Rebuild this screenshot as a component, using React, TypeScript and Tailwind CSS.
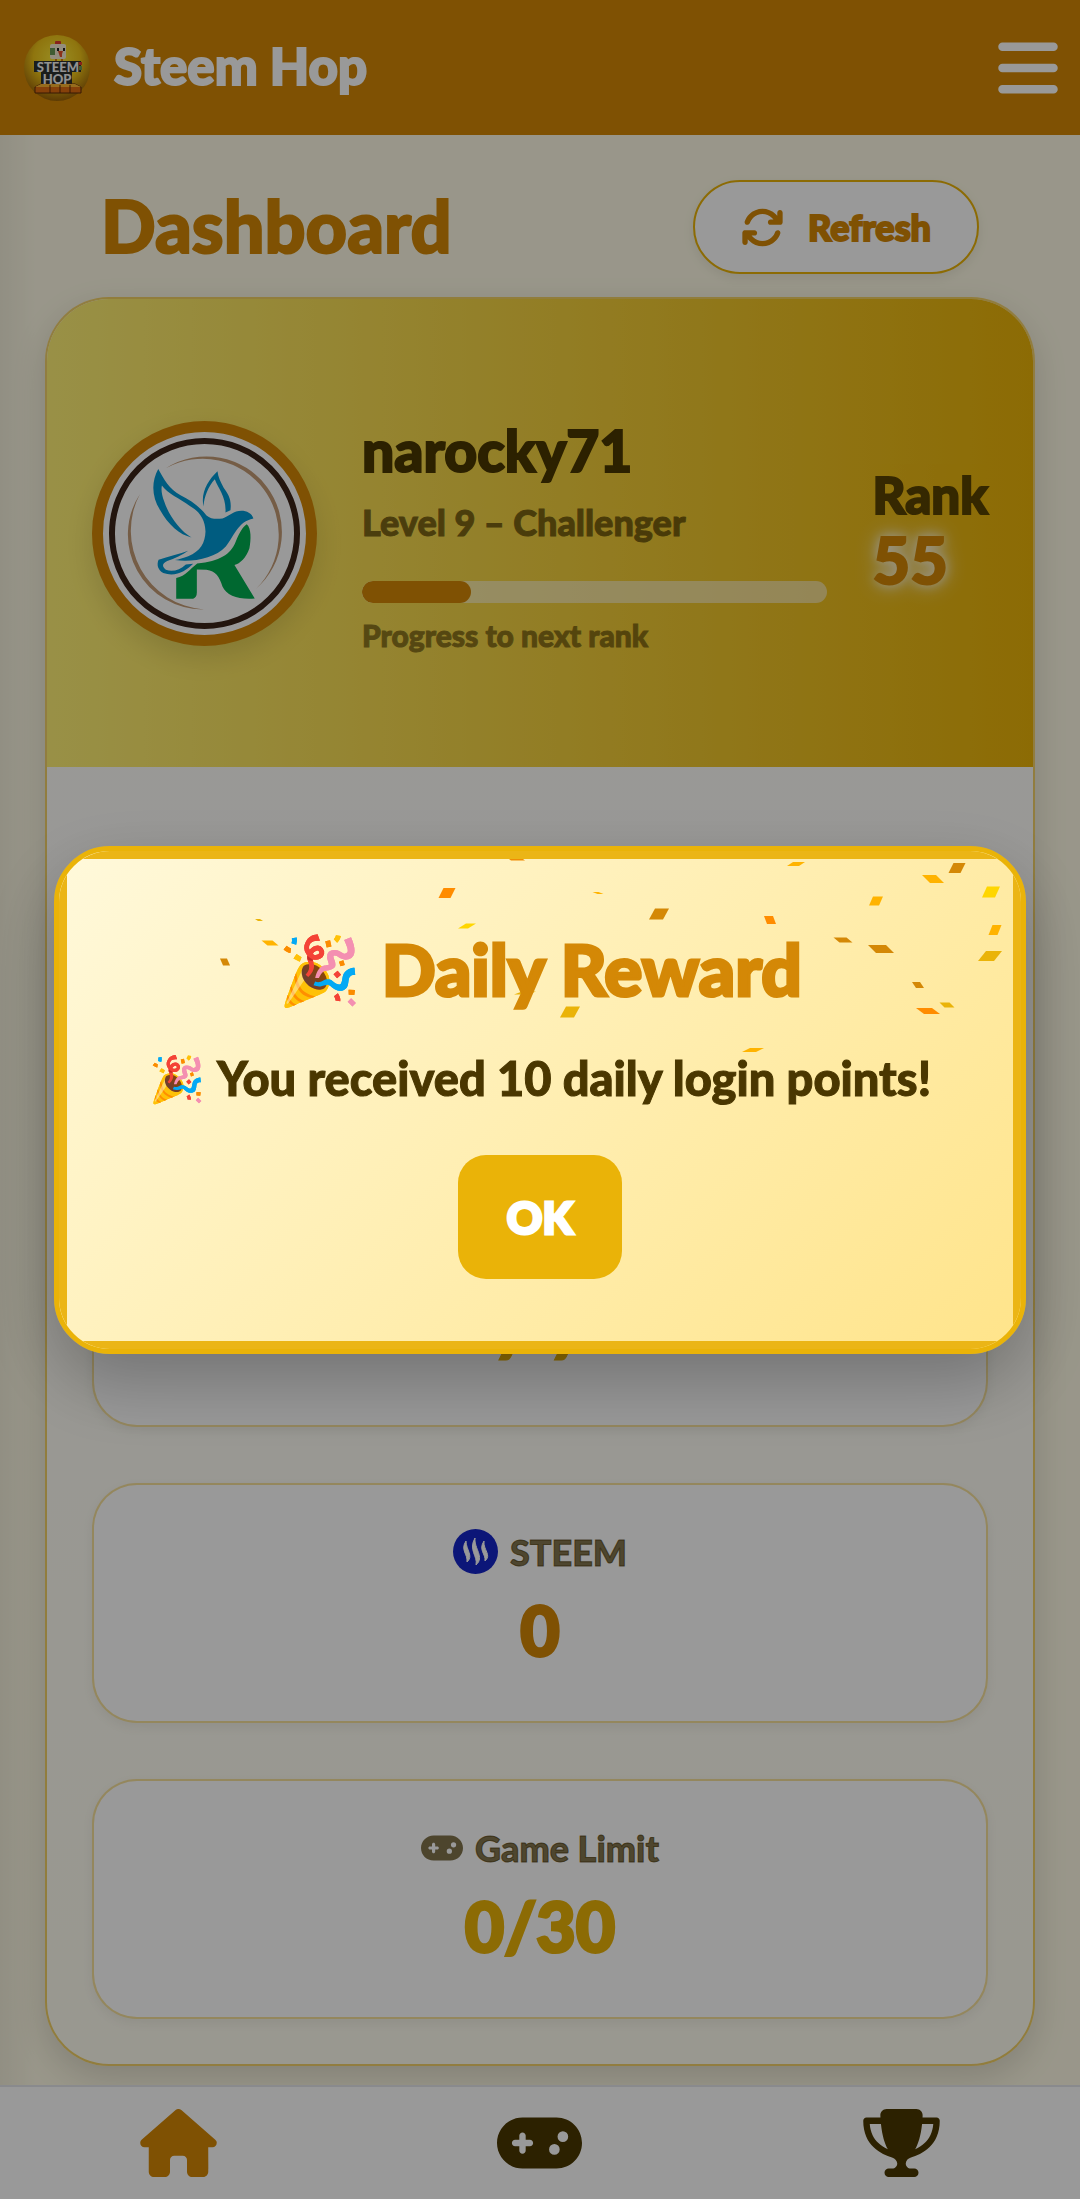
import type { ReactNode } from "react";
import { FaArrowsRotate, FaBars, FaGamepad, FaHouse, FaTrophy } from "react-icons/fa6";

type Confetto = [x: number, y: number, w: number, h: number, skew: number, color: string];

const CONFETTI: Confetto[] = [
  [457, 8, 14, 3, -4, "#f08c05"],
  [388, 42, 12, 10, 5, "#ff8c00"],
  [200, 69, 5, 2, -3, "#eab308"],
  [211, 92, 11, 5, -6, "#ffb300"],
  [166, 111, 7, 7, -3, "#d48806"],
  [408, 75, 10, 5, 8, "#ffd600"],
  [466, 142, 14, 3, 8, "#eab308"],
  [511, 161, 14, 11, 6, "#eab308"],
  [737, 13, 12, 4, 6, "#ffb300"],
  [898, 17, 12, 10, 5, "#d48806"],
  [874, 28, 14, 8, -8, "#ffb300"],
  [932, 41, 13, 11, 5, "#ffd600"],
  [817, 50, 10, 9, 4, "#ffb300"],
  [539, 42, 6, 2, -5, "#ffb300"],
  [600, 63, 14, 11, 6, "#d48806"],
  [711, 69, 9, 8, -3, "#ff8c00"],
  [936, 79, 9, 10, 4, "#ffb300"],
  [784, 89, 13, 5, -6, "#d48806"],
  [822, 98, 18, 8, -8, "#d48806"],
  [931, 105, 16, 10, 8, "#eab308"],
  [859, 134, 8, 6, -4, "#d48806"],
  [888, 154, 10, 5, -5, "#eab308"],
  [869, 160, 16, 6, -8, "#ff8c00"],
  [694, 199, 14, 4, 8, "#ffb300"],
];

function Confetti() {
  return (
    <svg aria-hidden="true" viewBox="0 0 962 498" className="pointer-events-none absolute inset-0 h-full w-full">
      {CONFETTI.map(([x, y, w, h, s, color]) => (
        <polygon
          key={`${x}-${y}`}
          fill={color}
          points={`${x - w / 2 + s / 2},${y - h / 2} ${x + w / 2 + s / 2},${y - h / 2} ${x + w / 2 - s / 2},${y + h / 2} ${x - w / 2 - s / 2},${y + h / 2}`}
        />
      ))}
    </svg>
  );
}

function AppLogo() {
  return (
    <svg role="img" aria-label="Steem Hop logo" viewBox="0 0 66 66" className="size-[66px]">
      <defs>
        <radialGradient id="ball" cx="0.5" cy="0.35" r="0.65">
          <stop offset="0" stopColor="#ffee3c" />
          <stop offset="0.55" stopColor="#eec318" />
          <stop offset="1" stopColor="#9a6208" />
        </radialGradient>
      </defs>
      <circle cx="33" cy="33" r="33" fill="url(#ball)" />
      <rect x="31" y="6" width="6" height="5" rx="1" fill="#e23a2e" />
      <rect x="26" y="9" width="16" height="15" rx="2" fill="#f6ecd2" />
      <rect x="26" y="13" width="5" height="7" fill="#6b9a55" />
      <rect x="33" y="13" width="2" height="3" fill="#222" />
      <rect x="39" y="13" width="2" height="3" fill="#222" />
      <path d="M34 16h5l-1 3v3h-2l-1-3z" fill="#e8502a" />
      <path d="M32 24v3M38 24v3" stroke="#d87612" strokeWidth="2" />
      <path d="M10 26h47v11h-9v12H17V37h-7z" fill="#2c3130" />
      <path d="M55 27h3v3h-3z" fill="#e23a2e" />
      <path d="M55 31h3v4h-3z" fill="#6b9a55" />
      <path d="M11 52l6-3h34l6 3v6H11z" fill="#e06d12" stroke="#5a2b08" strokeWidth="1" />
      <path d="M11 52l6-3h34l6 3z" fill="#fbb531" />
      <path d="M26 50v8M36 50v8M46 50v8" stroke="#5a2b08" strokeWidth="1" />
      <text x="34" y="37" textAnchor="middle" fontSize="13" fill="#f4f4f4" className="font-black">STEEM</text>
      <text x="33" y="49" textAnchor="middle" fontSize="13" fill="#f4f4f4" className="font-black">HOP</text>
    </svg>
  );
}

function Avatar() {
  return (
    <div className="size-[225px] shrink-0 overflow-hidden rounded-full border-[11px] border-[#d48806] bg-white shadow-[0_11px_28px_rgba(0,0,0,0.12)]">
      <svg role="img" aria-label="narocky71 avatar" viewBox="69 96 610 610" className="size-full">
        <circle cx="374" cy="401" r="278" fill="none" stroke="#3b2318" strokeWidth="18" />
        <path d="M258 205A226.8 226.8 0 0 1 528 568A228.2 228.2 0 0 0 258 205Z" fill="#c49b75" />
        <path d="M180 282A224.7 224.7 0 0 0 372 629A237 237 0 0 1 180 282Z" fill="#c49b75" />
        <path
          d="M501 373C515 385 514 420 509 445C499 475 481 490 464 496L525 596C478 600 440 588 428 560C418 530 408 514 380 510L351 509L351 578Q351 592 340 597L289 597L289 535C318 528 330 508 352 491C420 484 452 465 468 425C478 400 488 382 501 373Z"
          fill="#00ad50"
        />
        <path
          d="M235 207C214 245 215 290 240 330C264 374 300 406 335 413C300 393 266 345 253 305C246 285 243 270 246 257C262 280 300 297 330 318C360 335 376 360 377 395C376 428 362 455 325 469C310 474 298 478 285 481C340 488 404 476 438 440C466 404 474 366 521 356C517 341 500 333 485 333C462 333 448 349 428 356C410 358 392 358 380 347C358 318 330 300 302 286C268 268 252 238 235 207Z"
          fill="#0099d5"
        />
        <path
          d="M413 214C385 240 362 278 371 320C373 290 385 260 405 238C416 268 440 290 437 338L452 331C456 298 446 284 432 264C422 246 415 232 413 214Z"
          fill="#0099d5"
        />
        <path
          d="M325 453C300 462 270 470 236 480C230 494 233 510 250 520C288 532 318 514 340 492L318 494C300 510 278 518 258 510C246 500 246 492 262 484C284 476 308 466 325 453Z"
          fill="#0099d5"
        />
      </svg>
    </div>
  );
}

function SteemIcon() {
  return (
    <svg aria-hidden="true" viewBox="0 0 45 45" className="size-[45px]">
      <circle cx="22.5" cy="22.5" r="22.5" fill="#1525c8" />
      <g fill="#fff">
        <path d="M13 12C7 21 15 25 14 33C21 27 13 21 13 12Z" stroke="#fff" />
        <path d="M22 9C15 21 25 27 23 36C32 28 21 20 22 9Z" stroke="#fff" />
        <path d="M31 12C25 21 33 25 32 32C39 26 30 21 31 12Z" stroke="#fff" />
      </g>
    </svg>
  );
}

function StatCard({ label, value, valueClass }: { label?: ReactNode; value: string; valueClass: string }) {
  return (
    <section className="flex h-60 flex-col items-center rounded-[45px] border-2 border-[#eab308]/40 bg-white pt-11 shadow-[0_4px_12px_rgba(0,0,0,0.06)]">
      <h3 className="flex h-[45px] items-center gap-3 text-[36px] font-black text-[#4a3700]/70">{label}</h3>
      <p className={`mt-4 text-[68px] leading-[80px] font-black ${valueClass}`}>{value}</p>
    </section>
  );
}

export default function App() {
  return (
    <div className="relative flex min-h-screen flex-col bg-[#fffbe6] font-['Lato','Noto_Color_Emoji',sans-serif] text-[#4a3700] [-webkit-text-stroke:1px_currentColor]">
      <header className="relative z-10 flex h-[135px] items-center bg-[#d48806] px-6 text-white">
        <AppLogo />
        <span className="ml-6 pb-1 text-[51px] leading-none font-black [-webkit-text-stroke:2px_currentColor]">Steem Hop</span>
        <button type="button" aria-label="Menu" className="-mr-0.5 ml-auto">
          <FaBars className="h-[68px] w-[60px]" />
        </button>
      </header>
      <div aria-hidden="true" className="pointer-events-none absolute inset-y-0 left-0 w-9 bg-linear-to-r from-black/5 to-transparent" />

      <main className="px-[45px] pt-[45px] pb-[133px]">
        <div className="mb-[23px] flex items-center justify-between px-14">
          <h1 className="pb-1 text-[72px] leading-none font-black text-[#d48806] [-webkit-text-stroke:2px_currentColor]">Dashboard</h1>
          <button
            type="button"
            className="flex h-[94px] items-center gap-6 rounded-full border-2 border-[#eab308] bg-white px-[46px] text-[36px] font-black text-[#d48806] shadow-[0_4px_12px_rgba(0,0,0,0.08)] [-webkit-text-stroke:2px_currentColor]"
          >
            <FaArrowsRotate className="size-[43px]" />
            Refresh
          </button>
        </div>

        <div className="overflow-hidden rounded-[64px] border-2 border-[#eab308]/60 bg-linear-to-b from-white to-[#fffdf0] shadow-[0_12px_34px_rgba(0,0,0,0.14)]">
          <section className="flex h-[468px] items-center gap-[45px] bg-linear-[90deg,#fff176,#eab308] px-[45px]">
            <Avatar />
            <div className="min-w-0 flex-1 pt-1">
              <h2 className="text-[57px] leading-[68px] font-black [-webkit-text-stroke:2px_currentColor]">narocky71</h2>
              <p className="mt-4 text-[36px] leading-[45px] font-black opacity-70">Level 9 – Challenger</p>
              <div role="progressbar" aria-label="Progress to next rank" aria-valuenow={23} aria-valuemin={0} aria-valuemax={100} className="mt-9 h-[22px] overflow-hidden rounded-full bg-white/50">
                <div className="h-full w-[23.4%] rounded-full bg-[#d48806]" />
              </div>
              <p className="mt-3 text-[30px] leading-[40px] font-black opacity-60">Progress to next rank</p>
            </div>
            <div className="pb-3 text-[51px] leading-[64px] font-black [-webkit-text-stroke:2px_currentColor]">
              <p className="opacity-90">Rank</p>
              <p className="text-[65px] text-[#d48806] [text-shadow:0_0_12px_#fff,0_0_22px_#fff]">55</p>
            </div>
          </section>
          <div className="flex flex-col gap-14 px-[45px] pt-[420px] pb-[45px]">
            <StatCard value="7 7" valueClass="text-[#eab308]" />
            <StatCard
              label={
                <>
                  <SteemIcon />
                  STEEM
                </>
              }
              value="0"
              valueClass="text-[#d48806] [-webkit-text-stroke:3px_currentColor]"
            />
            <StatCard
              label={
                <>
                  <FaGamepad className="h-[34px] w-[42px]" />
                  Game Limit
                </>
              }
              value="0/30"
              valueClass="text-[#eab308] [-webkit-text-stroke:3px_currentColor]"
            />
          </div>
        </div>
      </main>

      <nav aria-label="Main" className="fixed inset-x-0 bottom-0 flex h-[114px] items-center justify-around border-t-2 border-[#e5e7eb] bg-white">
        <a href="#home" aria-label="Home" className="text-[#d48806]">
          <FaHouse className="h-[68px] w-[77px]" />
        </a>
        <a href="#games" aria-label="Games">
          <FaGamepad className="h-[68px] w-[85px]" />
        </a>
        <a href="#ranking" aria-label="Ranking">
          <FaTrophy className="h-[68px] w-[77px]" />
        </a>
      </nav>

      <div className="fixed inset-0 z-20 flex items-center justify-center bg-black/40">
        <div
          role="dialog"
          aria-modal="true"
          aria-labelledby="reward-title"
          className="relative w-[90%] overflow-hidden rounded-[56px] border-[5px] border-[#eab308] bg-linear-[135deg,#fff9db,#ffe48a] px-10 pt-[72px] pb-[70px] text-center shadow-[0_28px_70px_rgba(0,0,0,0.25)]"
        >
          <Confetti />
          <div aria-hidden="true" className="pointer-events-none absolute inset-0 border-8 border-[#ebb516]" />
          <h2 id="reward-title" className="relative flex h-[92px] items-center justify-center gap-5 text-[71px] leading-none font-black text-[#d48806] [-webkit-text-stroke:3px_currentColor]">
            <span className="text-[67px]">🎉</span>
            Daily Reward
          </h2>
          <p className="relative mt-7 flex h-[72px] items-center justify-center gap-3 text-[47px] leading-none font-black whitespace-nowrap">
            <span className="text-[45px]">🎉</span>
            You received 10 daily login points!
          </p>
          <button type="button" className="relative mt-10 h-[124px] w-[164px] rounded-[28px] bg-[#eab308] text-[44px] font-black text-white [-webkit-text-stroke:3px_currentColor]">
            OK
          </button>
        </div>
      </div>
    </div>
  );
}
